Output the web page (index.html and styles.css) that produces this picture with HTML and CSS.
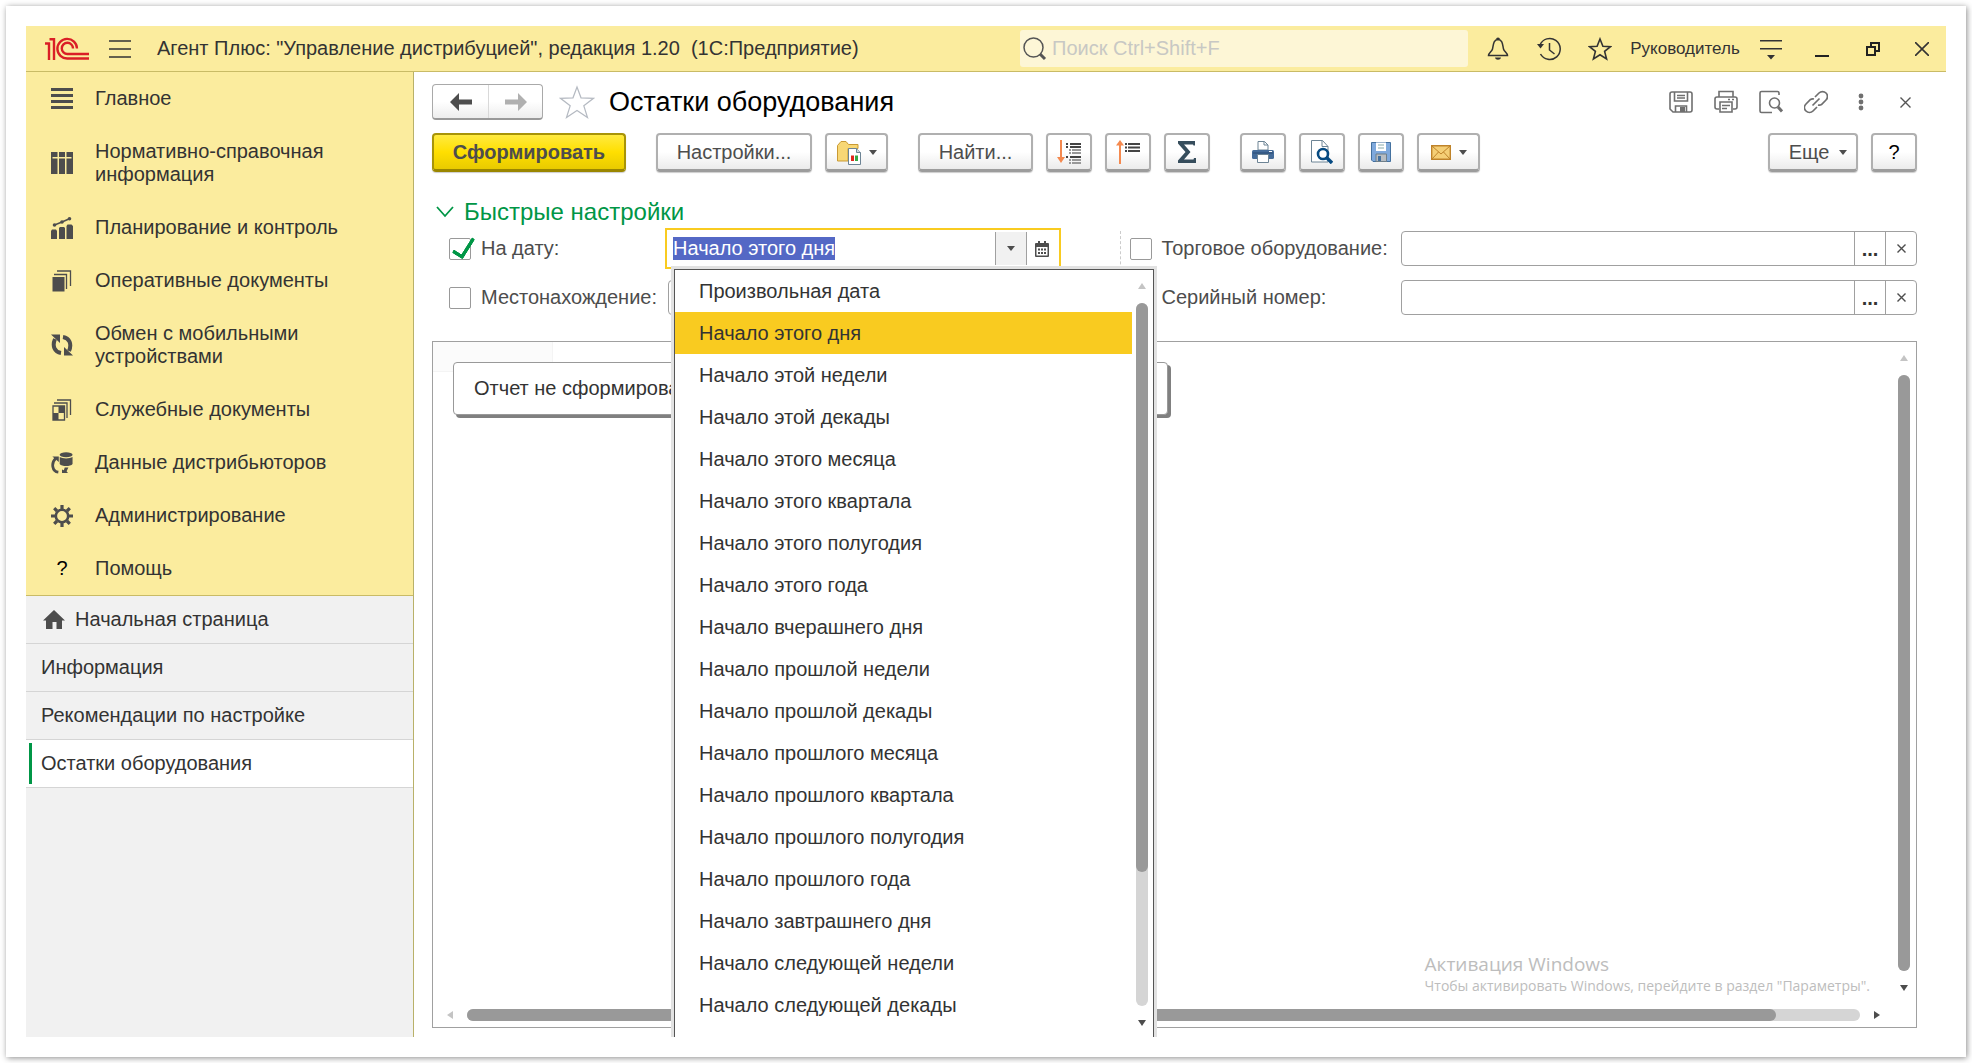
FILE: index.html
```html
<!DOCTYPE html>
<html lang="ru">
<head>
    <meta charset="UTF-8">
    <meta name="viewport" content="width=device-width, initial-scale=1.0">
    <title>Остатки оборудования</title>
    <link rel="stylesheet" href="styles.css">
</head>
<body>
<div class="frame">
<div class="app">

<!-- Title bar -->
<header class="topbar">
    <svg class="logo" width="44" height="24" viewBox="0 0 44 24" fill="none" stroke="#da1f26" stroke-width="2.400">
        <path d="M0 6.500h4V23M4.500 2.200h4.500V23"/>
        <path d="M32 11.500A9.800 9.800 0 1 0 22.500 21.500H44"/>
        <path d="M28 11.500A5.600 5.600 0 1 0 22.500 17H44"/>
    </svg>
    <button class="icon-btn burger" aria-label="Меню">
        <svg width="22" height="18" viewBox="0 0 22 18" stroke="#333" stroke-width="1.500"><path d="M0 1h22M0 9h22M0 17h22"/></svg>
    </button>
    <div class="app-title">Агент Плюс: "Управление дистрибуцией", редакция 1.20&nbsp; (1С:Предприятие)</div>
    <label class="search">
        <svg width="24" height="24" viewBox="0 0 24 24" fill="none" stroke="#555"><circle cx="10.500" cy="10.500" r="9.500" stroke-width="1.500"/><path d="M17 17l5 5" stroke-width="3"/></svg>
        <input type="text" placeholder="Поиск Ctrl+Shift+F" aria-label="Поиск">
    </label>
    <button class="icon-btn top-btn" aria-label="Уведомления">
        <svg width="22" height="24" viewBox="0 0 22 24" fill="none" stroke="#333" stroke-width="1.500"><path d="M11 2.500C6 3 6.500 8 5.500 12 5 14.500 1.500 16 1.500 18.500H20.500C20.500 16 17 14.500 16.500 12 15.500 8 16 3 11 2.500Z"/><path d="M9 2.500a2 2 0 0 1 4 0ZM8 20.500h6c-.5 3-5.500 3-6 0Z" fill="#333" stroke="none"/></svg>
    </button>
    <button class="icon-btn top-btn" aria-label="История">
        <svg width="24" height="24" viewBox="0 0 24 24" fill="none" stroke="#333" stroke-width="1.500"><path d="M3 8A10.500 10.500 0 1 1 3.500 17"/><path d="M12.500 6v7l5 4"/><path d="M0 7h7l-3.500 4.500Z" fill="#333" stroke="none"/></svg>
    </button>
    <button class="icon-btn top-btn" aria-label="Избранное">
        <svg width="24" height="24" viewBox="0 0 24 24" fill="none" stroke="#333" stroke-width="1.600"><path d="M12 2l2.900 7.200 7.600.4-5.900 4.800 2 7.600-6.600-4.200-6.600 4.200 2-7.600-5.900-4.800 7.600-.4Z"/></svg>
    </button>
    <a class="user" href="#">Руководитель</a>
    <button class="icon-btn top-btn" aria-label="Сервис">
        <svg width="22" height="22" viewBox="0 0 22 22" fill="#333"><path d="M0 2h22v1.500H0zM0 10h22v1.500H0zM7 17h8l-4 4.500z"/></svg>
    </button>
    <button class="icon-btn top-btn" aria-label="Свернуть">
        <svg width="14" height="16" viewBox="0 0 14 16"><path d="M0 14h14v2H0z" fill="#222"/></svg>
    </button>
    <button class="icon-btn top-btn" aria-label="Развернуть">
        <svg width="14" height="14" viewBox="0 0 14 14" fill="none" stroke="#222" stroke-width="2"><path d="M1 5h8v8H1zM5 5V1h8v8H9"/></svg>
    </button>
    <button class="icon-btn top-btn top-close" aria-label="Закрыть">
        <svg width="14" height="14" viewBox="0 0 14 14" stroke="#333" stroke-width="1.600"><path d="M0 0l14 14M14 0L0 14"/></svg>
    </button>
</header>

<div class="body">

<!-- Left panel -->
<aside class="sidebar">
    <nav class="sections">
        <a href="#">
            <svg width="22" height="22" viewBox="0 0 22 22" fill="#4d4d4d"><path d="M0 0h22v3H0zM0 6h22v3H0zM0 12h22v3H0zM0 18h22v3H0z"/></svg>
            <span>Главное</span>
        </a>
        <a href="#">
            <svg width="22" height="22" viewBox="0 0 22 22" fill="#4d4d4d"><path d="M0 0h6.500v5H1.500v1.500h5V22H0zM8 0h6v5H8zM8 6.500h6V22H8zM15.500 0H22v22h-6.500V6.500h5V5h-5z"/></svg>
            <span>Нормативно-справочная информация</span>
        </a>
        <a href="#">
            <svg width="22" height="22" viewBox="0 0 22 22" fill="#4d4d4d"><path d="M0 14l1-1.500h4L6 14v8H0zM8 11l1-1h4l1 1v11H8zM15.500 9l1-1.500h4L22 9v13h-6.500z"/><path d="M3.500 8L11 5l8-3.500" fill="none" stroke="#4d4d4d" stroke-width="1.500"/><circle cx="3.500" cy="8" r="1.800"/><circle cx="11" cy="5" r="1.800"/><circle cx="18.500" cy="1.800" r="1.800"/></svg>
            <span>Планирование и контроль</span>
        </a>
        <a href="#">
            <svg width="22" height="22" viewBox="0 0 22 22" fill="none" stroke="#4d4d4d" stroke-width="1.300"><path d="M1.500 7h12v14.500h-12z" fill="#4d4d4d" stroke="none"/><path d="M3 4.500h12.500V19M6 1h13.500v15"/></svg>
            <span>Оперативные документы</span>
        </a>
        <a href="#">
            <svg width="22" height="22" viewBox="0 0 22 22" fill="none" stroke="#4d4d4d" stroke-width="4"><path d="M10 19C3.500 18 1 12 4 5"/><path d="M12 3c6.500 1 9 7 6 14"/><path d="M0 .5h9V9zM22 21.500h-9V13z" fill="#4d4d4d" stroke="none"/></svg>
            <span>Обмен с мобильными устройствами</span>
        </a>
        <a href="#">
            <svg width="22" height="22" viewBox="0 0 22 22" fill="none" stroke="#4d4d4d" stroke-width="1.300"><path d="M2 7h11.500v14H2z"/><path d="M7.500 7h6v7h-6zM2 14h5.500v7H2z" fill="#4d4d4d" stroke="none"/><path d="M3 4h13v15M6 1h13.500v15"/></svg>
            <span>Служебные документы</span>
        </a>
        <a href="#">
            <svg width="24" height="24" viewBox="0 0 24 24" fill="#4d4d4d"><ellipse cx="16.500" cy="3" rx="7" ry="2.600"/><path d="M9.500 5.500c3 2 11 2 14 0V13c-2 3-12 3-14 0z"/><path d="M8 22C1 21 0 12 5 7" fill="none" stroke="#4d4d4d" stroke-width="3"/><path d="M1.500 5h7v6zM12 23h6.500l-1.500-2 2-4h-4l-1 3-2-1z"/></svg>
            <span>Данные дистрибьюторов</span>
        </a>
        <a href="#">
            <svg width="22" height="22" viewBox="0 0 22 22" fill="none" stroke="#4d4d4d"><circle cx="11" cy="11" r="6.200" stroke-width="2.600"/><path d="M11 0v4M11 18v4M0 11h4M18 11h4M3.200 3.200L6 6M16 16l2.800 2.800M18.800 3.200L16 6M6 16l-2.800 2.800" stroke-width="3.200"/></svg>
            <span>Администрирование</span>
        </a>
        <a href="#">
            <b class="question">?</b>
            <span>Помощь</span>
        </a>
    </nav>
    <nav class="tabs">
        <a href="#">
            <svg width="22" height="19" viewBox="0 0 22 19" fill="#4d4d4d"><path d="M11 0l11 10.500h-3V19h-5.500v-7h-4v7H3v-8.500H0z"/></svg>
            Начальная страница
        </a>
        <a href="#">Информация</a>
        <a href="#">Рекомендации по настройке</a>
        <a href="#" class="active">Остатки оборудования</a>
    </nav>
</aside>

<main class="content">
    <!-- Form header -->
    <div class="form-head">
        <div class="history">
            <button aria-label="Назад"><svg width="22" height="18" viewBox="0 0 22 18" fill="#4d4d4d"><path d="M0 9l9-9v6.500h13v5H9V18z"/></svg></button>
            <button aria-label="Вперед" disabled><svg width="22" height="18" viewBox="0 0 22 18" fill="#b0b0b0"><path d="M22 9l-9-9v6.500H0v5h13V18z"/></svg></button>
        </div>
        <button class="icon-btn fav" aria-label="В избранное">
            <svg width="36" height="34" viewBox="0 0 36 34" fill="#fff" stroke="#b5bac2" stroke-width="1.200"><path d="M18 2l4 10.800 12.500.5-9.700 7.500 3.700 11.700L18 25.500 7.500 32.500l3.700-11.700-9.700-7.500 12.500-.5z"/></svg>
        </button>
        <h1>Остатки оборудования</h1>
        <div class="form-tools">
            <button class="icon-btn" aria-label="Сохранить"><svg width="24" height="22" viewBox="0 0 24 22" fill="none" stroke="#6f6f6f" stroke-width="1.600"><path d="M3 1h18q2 0 2 2v16q0 2-2 2H4l-3-3V3q0-2 2-2z"/><path d="M5.500 1v9h13V1M8 4.500h8M8 7h8M6.500 21v-6h11v6"/><path d="M11 16h5v5h-5z" fill="#6f6f6f" stroke="none"/></svg></button>
            <button class="icon-btn" aria-label="Печать"><svg width="24" height="24" viewBox="0 0 24 24" fill="none" stroke="#6f6f6f" stroke-width="1.600"><path d="M5 7V1.500h14V7M5 19H3q-2 0-2-2V9q0-2 2-2h18q2 0 2 2v8q0 2-2 2h-2"/><path d="M6 12h12v10H6zM8 15.500h8M8 18.500h5M14 9.500h2M18 9.500h2"/></svg></button>
            <button class="icon-btn" aria-label="Просмотр"><svg width="24" height="24" viewBox="0 0 24 24" fill="none" stroke="#6f6f6f" stroke-width="1.600"><path d="M20 5V3q0-1.500-1.500-1.500h-16Q1 1.500 1 3v18q0 1.500 1.500 1.500H13"/><circle cx="15.500" cy="13" r="5"/><path d="M19 17l4 4.500" stroke-width="3"/></svg></button>
            <button class="icon-btn" aria-label="Ссылка"><svg width="24" height="24" viewBox="0 0 24 24" fill="none" stroke="#6f6f6f" stroke-width="1.700"><path d="M11 7l4-4a4.800 4.800 0 0 1 7 7l-4.500 4.500q-1.500 1-3.500.5M13 17l-4 4a4.800 4.800 0 0 1-7-7l4.500-4.500Q8 8.500 10 9M8.500 15.500l7-7"/></svg></button>
            <button class="icon-btn" aria-label="Еще"><svg width="6" height="18" viewBox="0 0 6 18" fill="#6f6f6f"><circle cx="3" cy="3" r="2.400"/><circle cx="3" cy="9" r="2.400"/><circle cx="3" cy="15" r="2.400"/></svg></button>
            <button class="icon-btn" aria-label="Закрыть форму"><svg width="11" height="11" viewBox="0 0 11 11" stroke="#555" stroke-width="1.400"><path d="M.5.500l10 10M10.500.500l-10 10"/></svg></button>
        </div>
    </div>

    <!-- Command bar -->
    <div class="commands">
        <button class="cmd primary">Сформировать</button>
        <button class="cmd settings-btn gap">Настройки...</button>
        <button class="cmd drop" aria-label="Варианты отчета">
            <svg width="24" height="25" viewBox="0 0 24 25"><path d="M.5 21V5.500L4 1.500h5L11.500 4.500H21v4H11v12.500z" fill="#f8d775" stroke="#c99a35"/><path d="M11.500 8.500h8l4 4v12h-12z" fill="#fff" stroke="#6d8495"/><path d="M19.500 8.500v4h4" fill="#cfd9df" stroke="#6d8495"/><path d="M14 15.500h3V21h-3z" fill="#e0261c"/><path d="M18 15.500h3V21h-3z" fill="#36a845"/></svg>
            <i class="caret"></i>
        </button>
        <button class="cmd find gap">Найти...</button>
        <button class="cmd square" aria-label="Развернуть группы">
            <svg width="24" height="24" viewBox="0 0 24 24" stroke-width="2"><path d="M4 0v18" stroke="#f4894f"/><path d="M0 17h8l-4 6z" fill="#f4894f"/><path d="M9 4h2M13 4h11M9 7h2M13 7h11M9 17h2M13 17h11" stroke="#444"/><path d="M12 10h2M15 10h9M12 13h2M15 13h9M12 20h2M15 20h9M12 23h2M15 23h9" stroke="#999"/></svg>
        </button>
        <button class="cmd square" aria-label="Свернуть группы">
            <svg width="24" height="24" viewBox="0 0 24 24" stroke-width="2"><path d="M4 5v19" stroke="#f4894f"/><path d="M0 5.500h8L4 0z" fill="#f4894f"/><path d="M9 4h2M12 4h12M9 7.500h2M12 7.500h12M9 11h2M12 11h12" stroke="#444"/></svg>
        </button>
        <button class="cmd square" aria-label="Сумма">
            <svg width="18" height="22" viewBox="0 0 18 22" fill="#364d5c"><path d="M0 0h17v4.500h-1.500L15 3.500H6L12.500 11 6 18.500h9.500l.5-1.500H18v5H0v-2.500L7.500 11 0 2.500z"/></svg>
        </button>
        <button class="cmd square gap" aria-label="Печать отчета">
            <svg width="22" height="22" viewBox="0 0 22 22"><path d="M6 9V.500h6.500L16 4v5z" fill="#fff" stroke="#6d8495"/><path d="M12 .5V4h4" fill="none" stroke="#6d8495"/><rect x="0" y="9" width="22" height="9" rx="1.500" fill="#446b99"/><path d="M1 12h20" stroke="#294a73"/><path d="M5.500 13.500h11v8h-11z" fill="#fff" stroke="#6d8495"/><path d="M17 10.500h3" stroke="#fff"/></svg>
        </button>
        <button class="cmd square" aria-label="Предварительный просмотр">
            <svg width="22" height="24" viewBox="0 0 22 24" fill="none"><path d="M.5.500h11l5.500 6v15.500H.500z" fill="#fff" stroke="#6d8495"/><path d="M11 .5v6h6" stroke="#6d8495"/><circle cx="12" cy="14" r="5" fill="#fff" stroke="#064a82" stroke-width="2.600"/><path d="M15.500 17.500l5.500 5.500" stroke="#064a82" stroke-width="3.500"/></svg>
        </button>
        <button class="cmd square" aria-label="Сохранить отчет">
            <svg width="20" height="20" viewBox="0 0 20 20"><path d="M.5.500h19v19H2l-1.500-1.500z" fill="#7fa9dc" stroke="#44719f"/><path d="M5 .5h10V9H5z" fill="#fff"/><path d="M7 3h6M7 6h6" stroke="#8aa"/><path d="M5 12h10.500v7.500H5z" fill="#b7bdc2" stroke="#6f7f8a"/><path d="M7 14h3v5H7z" fill="#44719f"/></svg>
        </button>
        <button class="cmd drop" aria-label="Отправить">
            <svg width="20" height="15" viewBox="0 0 20 15"><path d="M.7.700h18.600v13.600H.700z" fill="#f5cf76" stroke="#bf832a" stroke-width="1.400"/><path d="M1 1l9 8 9-8M1 14l6.500-7M19 14l-6.500-7" fill="none" stroke="#bf832a"/></svg>
            <i class="caret"></i>
        </button>
        <button class="cmd more">Еще <i class="caret"></i></button>
        <button class="cmd square help">?</button>
    </div>

    <!-- Quick settings -->
    <h2 class="group-title">
        <svg width="18" height="12" viewBox="0 0 18 12" fill="none" stroke="#009646" stroke-width="1.800"><path d="M1 1l8 9 8-9"/></svg>
        Быстрые настройки
    </h2>
    <div class="quick">
        <div class="column left">
            <label class="check"><input type="checkbox" checked>На дату:</label>
            <div class="combo">
                <div class="field focused">
                    <input type="text" id="date" value="Начало этого дня" aria-label="Дата">
                    <button class="open" aria-label="Открыть список"><i class="caret"></i></button>
                    <button class="calendar" aria-label="Календарь">
                        <svg width="14" height="16" viewBox="0 0 14 16" fill="#4d4d4d"><path d="M1 2h12q1 0 1 1v12q0 1-1 1H1q-1 0-1-1V3q0-1 1-1z"/><path d="M1.500 6h11v8.500h-11z" fill="#fff"/><path d="M3 7.500h2v2H3zM6 7.500h2v2H6zM9 7.500h2v2H9zM3 11h2v2H3zM6 11h2v2H6zM9 11h2v2H9zM3 0h2v4H3zM9 0h2v4H9z"/></svg>
                    </button>
                </div>
                <div class="popup">
                    <ul role="listbox" aria-label="Варианты даты">
                        <li role="option">Произвольная дата</li>
                        <li role="option" aria-selected="true" class="selected">Начало этого дня</li>
                        <li role="option">Начало этой недели</li>
                        <li role="option">Начало этой декады</li>
                        <li role="option">Начало этого месяца</li>
                        <li role="option">Начало этого квартала</li>
                        <li role="option">Начало этого полугодия</li>
                        <li role="option">Начало этого года</li>
                        <li role="option">Начало вчерашнего дня</li>
                        <li role="option">Начало прошлой недели</li>
                        <li role="option">Начало прошлой декады</li>
                        <li role="option">Начало прошлого месяца</li>
                        <li role="option">Начало прошлого квартала</li>
                        <li role="option">Начало прошлого полугодия</li>
                        <li role="option">Начало прошлого года</li>
                        <li role="option">Начало завтрашнего дня</li>
                        <li role="option">Начало следующей недели</li>
                        <li role="option">Начало следующей декады</li>
                    </ul>
                    <div class="vscroll">
                        <i class="up"></i>
                        <div class="track"><div class="thumb popup-thumb"></div></div>
                        <i class="down"></i>
                    </div>
                </div>
            </div>
            <label class="check"><input type="checkbox">Местонахождение:</label>
            <div class="field"><input type="text" aria-label="Местонахождение"></div>
        </div>
        <div class="column right">
            <label class="check"><input type="checkbox">Торговое оборудование:</label>
            <div class="field">
                <input type="text" aria-label="Торговое оборудование">
                <button class="dots" aria-label="Выбрать">...</button>
                <button aria-label="Очистить"><svg width="9" height="9" viewBox="0 0 9 9" stroke="#4d4d4d" stroke-width="1.400"><path d="M.5.500l8 8M8.500.500l-8 8"/></svg></button>
            </div>
            <label class="check"><input type="checkbox">Серийный номер:</label>
            <div class="field">
                <input type="text" aria-label="Серийный номер">
                <button class="dots" aria-label="Выбрать">...</button>
                <button aria-label="Очистить"><svg width="9" height="9" viewBox="0 0 9 9" stroke="#4d4d4d" stroke-width="1.400"><path d="M.5.500l8 8M8.500.500l-8 8"/></svg></button>
            </div>
        </div>
    </div>

    <!-- Report area -->
    <section class="report">
        <div class="sheet">
            <div class="cell"></div>
            <div class="message">Отчет не сформирован.</div>
            <div class="watermark">
                <p class="wm-title">Активация Windows</p>
                <p>Чтобы активировать Windows, перейдите в раздел "Параметры".</p>
            </div>
        </div>
        <div class="vscroll">
            <i class="up"></i>
            <div class="track"><div class="thumb"></div></div>
            <i class="down"></i>
        </div>
        <div class="hscroll">
            <i class="prev"></i>
            <div class="track"><div class="thumb"></div></div>
            <i class="next"></i>
        </div>
    </section>
</main>

</div>
</div>
</div>

<script>
    // The date field opens with its whole text selected
    const dateField = document.getElementById('date');
    dateField.focus();
    dateField.select();
</script>

</body>
</html>
```
FILE: styles.css
```css
* {
    box-sizing: border-box;
}
body {
    margin: 0;
    padding: 6px;
    height: 100vh;
    background: #fff;
    font-family: "Liberation Sans", Arial, sans-serif;
    font-size: 20px;
    color: #333;
}
button, input {
    font: inherit;
    color: inherit;
}
button {
    padding: 0;
    border: none;
    background: none;
    cursor: pointer;
}
a {
    color: inherit;
    text-decoration: none;
}
svg {
    display: block;
    flex: none;
}
h1, h2, p, ul {
    margin: 0;
    padding: 0;
    font-weight: normal;
}
.frame {
    height: 100%;
    padding: 20px;
    background: #fff;
    box-shadow: 1px 1px 6px rgba(0,0,0,0.45);
}
.app {
    height: 100%;
    display: flex;
    flex-direction: column;
    overflow: hidden;
}
.icon-btn {
    display: flex;
    align-items: center;
    justify-content: center;
}

/* Title bar */
.topbar {
    display: flex;
    align-items: center;
    height: 46px;
    flex: none;
    padding-left: 19px;
    background: #fbec9e;
    border-bottom: 1px solid #c9bb66;
}
.burger {
    margin: 0 26px 0 20px;
}
.app-title {
    flex: 1;
    white-space: nowrap;
}
.search {
    display: flex;
    align-items: center;
    gap: 3px;
    width: 448px;
    height: 37px;
    margin-right: 4px;
    padding-left: 3px;
    background: #fdf6d6;
    border-radius: 3px;
}
.search input {
    flex: 1;
    border: none;
    outline: none;
    background: none;
}
.search input::placeholder {
    color: #c8c8c4;
}
.top-btn {
    width: 51px;
    height: 45px;
}
.top-close {
    width: 48px;
}
.user {
    width: 120px;
    font-size: 17px;
    text-align: center;
}

/* Left panel */
.body {
    flex: 1;
    display: flex;
    min-height: 0;
}
.sidebar {
    width: 388px;
    flex: none;
    background: #f1f1f1;
    border-right: 1px solid #b9b169;
}
.sections {
    background: #fbec9e;
    border-bottom: 1px solid #c9bb66;
}
.sections a {
    display: flex;
    align-items: center;
    gap: 22px;
    padding: 15px 50px 15px 25px;
    line-height: 23px;
}
.sections svg {
    width: 22px;
    height: 22px;
}
.question {
    width: 22px;
    color: #000;
    font-weight: normal;
    text-align: center;
}
.tabs a {
    position: relative;
    display: flex;
    align-items: center;
    gap: 10px;
    height: 48px;
    padding-left: 15px;
    border-bottom: 1px solid #d5d5d5;
}
.tabs svg {
    margin-left: 2px;
}
.tabs .active {
    background: #fff;
}
.tabs .active::before {
    content: "";
    position: absolute;
    left: 3px;
    top: 3px;
    bottom: 3px;
    width: 3px;
    background: #009646;
}

/* Form header */
.content {
    flex: 1;
    display: flex;
    flex-direction: column;
    min-width: 0;
    padding: 12px 29px 9px 18px;
}
.form-head {
    display: flex;
    align-items: center;
    height: 36px;
}
.history {
    display: flex;
    height: 36px;
    border: 1px solid #a9a9a9;
    border-bottom: 2px solid #999;
    border-radius: 4px;
    background: linear-gradient(#fff 50%, #ededed);
}
.history button {
    display: flex;
    align-items: center;
    justify-content: center;
    width: 55px;
}
.history button + button {
    width: 54px;
    border-left: 1px solid #d9d9d9;
}
.fav {
    margin: 0 14px 0 16px;
}
h1 {
    flex: 1;
    color: #000;
    font-size: 27px;
}
.form-tools {
    display: flex;
    margin-right: -11px;
}
.form-tools button {
    width: 45px;
    height: 36px;
}

/* Command bar */
.commands {
    display: flex;
    gap: 13px;
    margin-top: 13px;
}
.cmd {
    display: flex;
    align-items: center;
    justify-content: center;
    height: 39px;
    border: 2px solid #b0b0b0;
    border-bottom: 3px solid #9c9c9c;
    border-radius: 4px;
    background: linear-gradient(#fff 50%, #ebebeb);
    box-shadow: 0 1px 1px #ccc;
    color: #4d4d4d;
}
.cmd.gap {
    margin-left: 17px;
}
.primary {
    width: 194px;
    border-color: #a89408;
    border-bottom-color: #9a8600;
    background: linear-gradient(#ffea40, #ffdf00 50%, #e8cb00);
    font-weight: bold;
}
.settings-btn {
    width: 156px;
}
.find {
    width: 115px;
}
.square {
    width: 46px;
}
.drop {
    width: 63px;
    gap: 8px;
}
.more {
    width: 90px;
    gap: 10px;
    margin-left: auto;
    padding-left: 10px;
}
.help {
    color: #000;
}
.caret {
    width: 0;
    border: 4px solid transparent;
    border-top: 5px solid #4d4d4d;
    border-bottom: none;
}

/* Quick settings */
.group-title {
    display: flex;
    align-items: center;
    gap: 10px;
    margin-top: 26px;
    padding-left: 4px;
    color: #009646;
    font-size: 24px;
    line-height: 28px;
}
.quick {
    display: grid;
    grid-template-columns: 25fr 29fr;
    margin-top: 5px;
}
.column {
    display: grid;
    grid-template-rows: 35px 35px;
    row-gap: 14px;
}
.left {
    grid-template-columns: 219px 1fr;
    padding: 0 62px 0 17px;
}
.right {
    grid-template-columns: 271px 1fr;
    padding-left: 9px;
    border-left: 1px dashed #ccc;
}
.check {
    display: flex;
    align-items: center;
    gap: 10px;
    color: #4d4d4d;
    white-space: nowrap;
}
.check input {
    appearance: none;
    position: relative;
    width: 22px;
    height: 22px;
    margin: 0;
    border: 1px solid #999;
    border-radius: 2px;
    background: #fff;
}
.check input:checked::after {
    content: "";
    position: absolute;
    left: 7px;
    top: -5px;
    width: 9px;
    height: 20px;
    border: solid #009646;
    border-width: 0 4px 4px 0;
    border-radius: 2px;
    transform: rotate(32deg);
}
.combo {
    position: relative;
}
.field {
    display: flex;
    height: 35px;
    border: 1px solid #a0a0a0;
    border-radius: 4px;
    background: #fff;
}
.field input {
    flex: 1;
    min-width: 0;
    padding: 0 4px;
    border: none;
    outline: none;
    background: none;
}
.field input::selection {
    background: #5468c5;
    color: #fff;
}
.field button {
    display: flex;
    align-items: center;
    justify-content: center;
    width: 31px;
    border-left: 1px solid #a0a0a0;
}
.field .dots {
    padding-top: 2px;
    font-weight: bold;
}
.field.focused {
    border-color: transparent;
    border-radius: 0;
    outline: 2px solid #f9cb20;
    outline-offset: 1px;
}
.field .open {
    width: 32px;
    border-right: 1px solid #a0a0a0;
    background: #f1f1f1;
}
.field .calendar {
    width: 30px;
    border-left: none;
}

/* Drop-down list */
.popup {
    position: absolute;
    z-index: 1;
    top: 38px;
    left: 6px;
    display: flex;
    width: 480px;
    padding-bottom: 16px;
    background: #fff;
    border: 1px solid #555;
    box-shadow: 0 0 0 3px #e2e2e2;
    color: #333;
}
.popup ul {
    flex: 1;
    list-style: none;
}
.popup li {
    padding-left: 24px;
    line-height: 42px;
}
.popup .selected {
    background: #f9cb20;
}

/* Scroll bars */
.vscroll {
    display: flex;
    flex-direction: column;
    align-items: center;
    gap: 14px;
    width: 21px;
    padding: 13px 2px 0 0;
}
.track {
    flex: 1;
    border-radius: 6px;
    background: #d5d5d5;
}
.thumb {
    border-radius: 6px;
    background: #999;
}
.vscroll .track {
    width: 12px;
}
.vscroll .thumb {
    height: 100%;
}
.vscroll .popup-thumb {
    height: 81%;
}
.vscroll i, .hscroll i {
    width: 0;
    height: 0;
    border: 4px solid transparent;
}
.vscroll .up {
    border-top: none;
    border-bottom: 6px solid #c4c4c4;
}
.vscroll .down {
    border-bottom: none;
    border-top: 6px solid #4d4d4d;
}
.hscroll {
    display: flex;
    align-items: center;
    gap: 14px;
    padding: 8px 14px 0 14px;
}
.hscroll .thumb {
    width: 94%;
    height: 12px;
}
.hscroll .prev {
    border-left: none;
    border-right: 6px solid #c4c4c4;
}
.hscroll .next {
    border-right: none;
    border-left: 6px solid #4d4d4d;
}

/* Report area */
.report {
    flex: 1;
    display: grid;
    grid-template: 1fr 32px / 1fr 22px;
    margin-top: 26px;
    border: 1px solid #a0a0a0;
}
.sheet {
    position: relative;
    display: flex;
    flex-direction: column;
    align-items: flex-start;
    justify-content: space-between;
    padding: 20px 12px 0 20px;
}
.cell {
    position: absolute;
    left: 0;
    top: 0;
    width: 120px;
    height: 30px;
    background: #fbfbfb;
    border: solid #f4f4f4;
    border-width: 0 1px 1px 0;
}
.message {
    position: relative;
    width: 50%;
    padding: 0 20px;
    border: 1px solid #999;
    border-radius: 4px;
    background: #fff;
    box-shadow: 3px 3px 0 #808080;
    line-height: 51px;
}
.report .vscroll {
    align-items: flex-start;
    padding: 13px 0 4px 4px;
    gap: 14px;
}
.report .vscroll i {
    margin-left: 2px;
}
.watermark {
    align-self: flex-end;
    margin-right: 12px;
    color: #bdbdbd;
    font-family: "Open Sans", sans-serif;
    font-size: 14px;
    line-height: 18px;
}
.wm-title {
    font-size: 19px;
    line-height: 26px;
}
```
